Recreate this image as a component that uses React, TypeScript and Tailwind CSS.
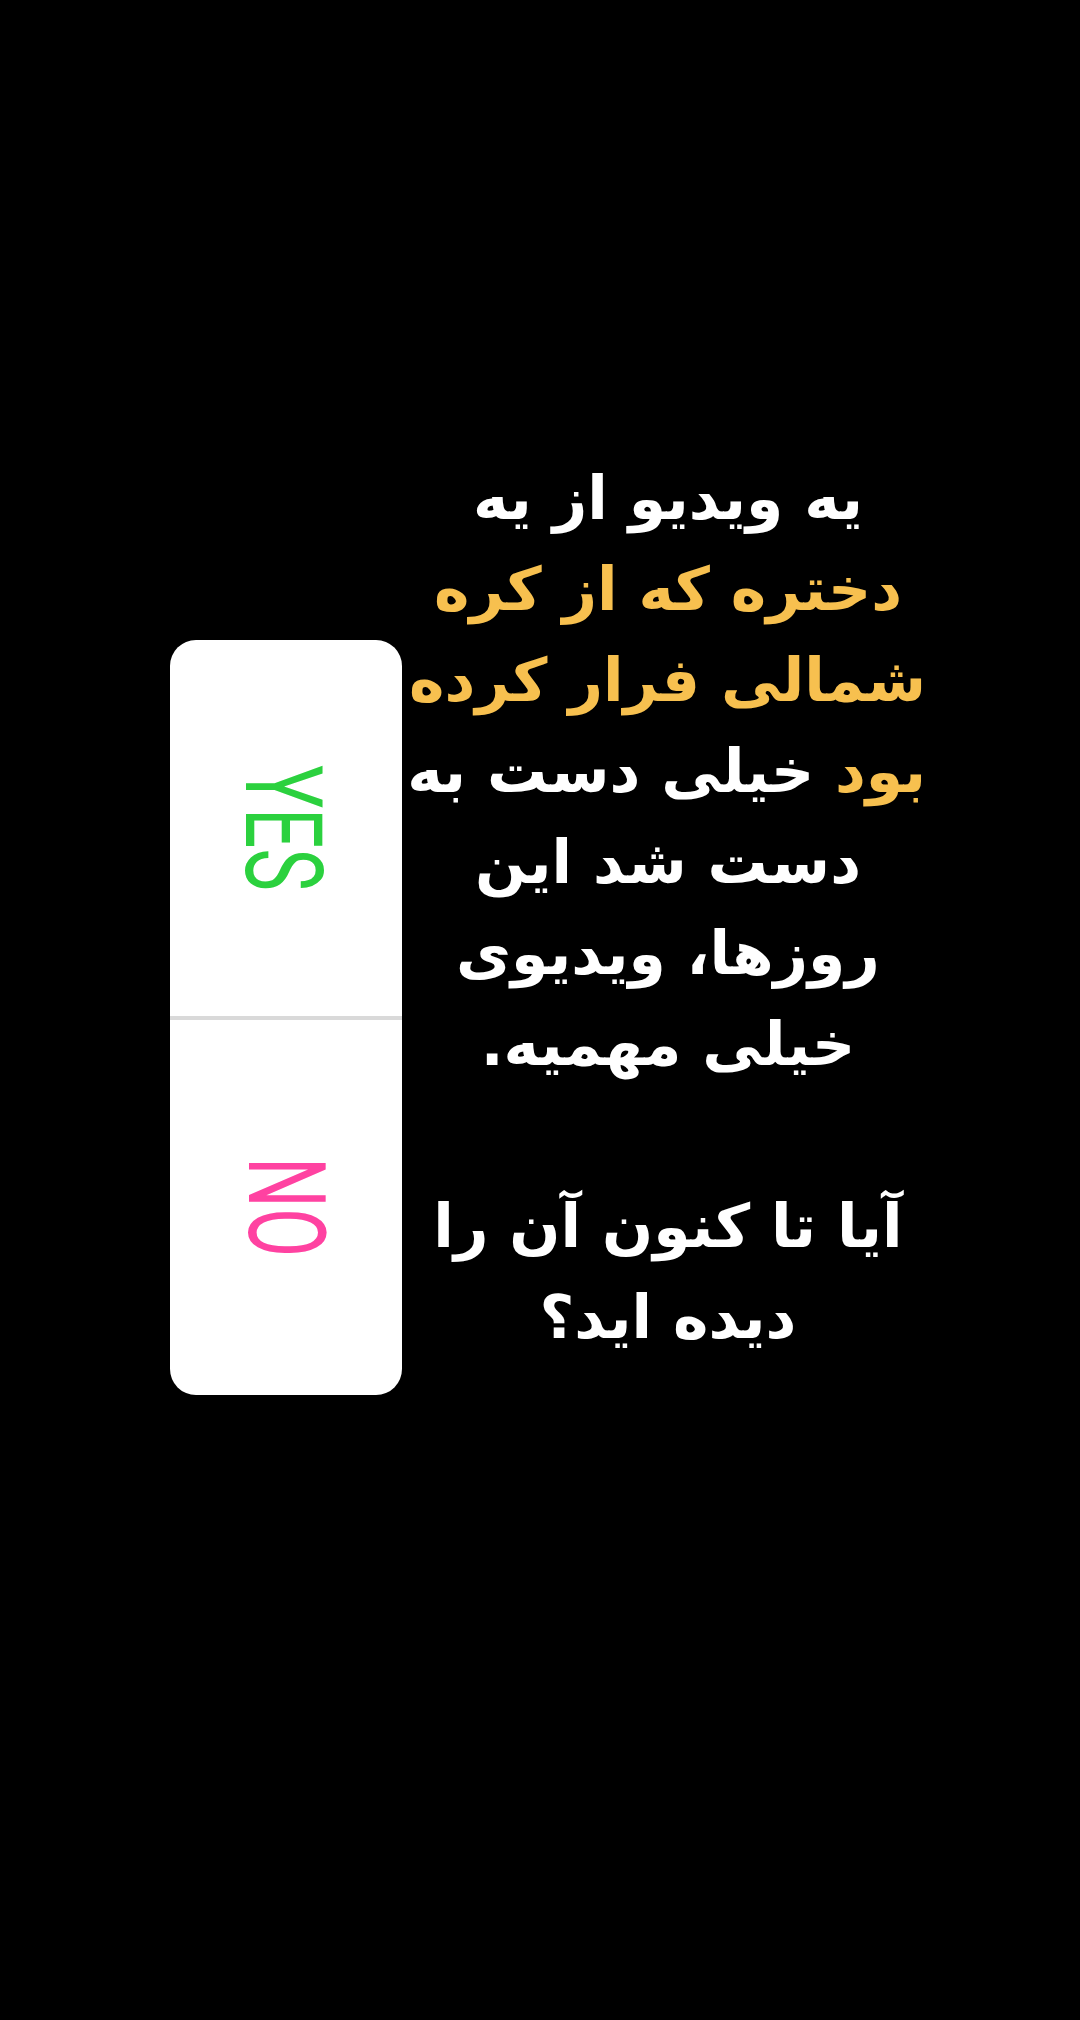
import React from "react"

const lines: { parts: { text: string; yellow?: boolean }[] }[] = [
  { parts: [{ text: "یه ویدیو از یه" }] },
  { parts: [{ text: "دختره که از کره", yellow: true }] },
  { parts: [{ text: "شمالی فرار کرده", yellow: true }] },
  { parts: [{ text: "بود", yellow: true }, { text: " خیلی دست به" }] },
  { parts: [{ text: "دست شد این" }] },
  { parts: [{ text: "روزها، ویدیوی" }] },
  { parts: [{ text: "خیلی مهمیه." }] },
  { parts: [] },
  { parts: [{ text: "آیا تا کنون آن را" }] },
  { parts: [{ text: "دیده اید؟" }] },
]

const PollSticker = () => (
  <div className="mt-[187px] flex h-[755px] w-[232px] shrink-0 flex-col overflow-hidden rounded-[26px] bg-white">
    <div className="flex flex-1 items-center justify-center">
      <span className="-translate-x-[3px] rotate-90 scale-x-[0.66] font-['Roboto',sans-serif] text-[108px] font-normal leading-none text-[#2bd13e]">
        YES
      </span>
    </div>
    <div className="h-[4px] bg-[#d9d9d9]" />
    <div className="flex flex-1 items-center justify-center">
      <span className="rotate-90 scale-x-[0.66] font-['Roboto',sans-serif] text-[108px] font-normal leading-none text-[#ff42a1]">
        NO
      </span>
    </div>
  </div>
)

export default function App() {
  return (
    <div className="min-h-[2020px] w-[1080px] bg-black">
      <div className="flex gap-[8px] pl-[170px] pt-[453px]">
        <PollSticker />
        <div
          dir="rtl"
          className="w-[516px] text-center font-['DejaVu_Sans',sans-serif] text-[60px] font-bold leading-[91px] text-white"
        >
          {lines.map((line, i) => (
            <div key={i} className="h-[91px] whitespace-nowrap">
              {line.parts.map((p, j) => (
                <span key={j} className={p.yellow ? "text-[#f7c04f]" : ""}>
                  {p.text}
                </span>
              ))}
            </div>
          ))}
        </div>
      </div>
    </div>
  )
}
